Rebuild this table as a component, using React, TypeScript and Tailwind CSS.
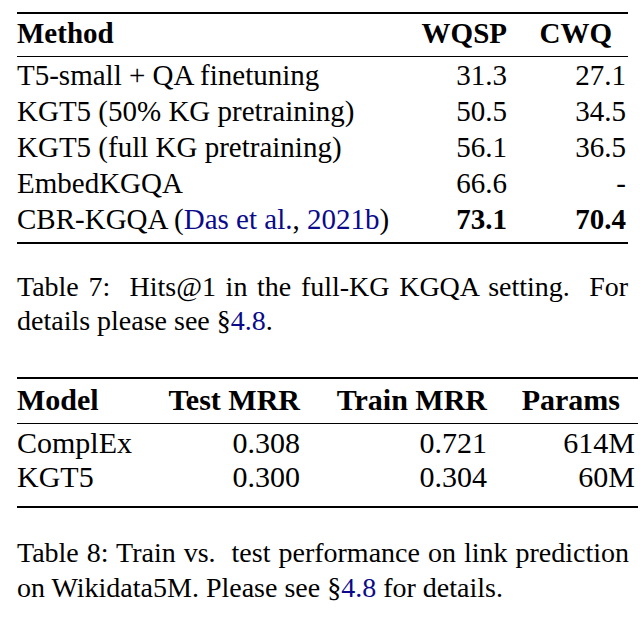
import React from "react";

const serif = { fontFamily: '"Liberation Serif", "Times New Roman", serif' };

function Link({ children }: { children: React.ReactNode }) {
  return <span className="text-[#0a0a8a]">{children}</span>;
}

export default function App() {
  const rows1: [React.ReactNode, string, string, boolean][] = [
    ["T5-small + QA finetuning", "31.3", "27.1", false],
    ["KGT5 (50% KG pretraining)", "50.5", "34.5", false],
    ["KGT5 (full KG pretraining)", "56.1", "36.5", false],
    ["EmbedKGQA", "66.6", "-", false],
    [
      <>
        CBR-KGQA (<Link>Das et al.</Link>, <Link>2021b</Link>)
      </>,
      "73.1",
      "70.4",
      true,
    ],
  ];
  const rows2 = [
    ["ComplEx", "0.308", "0.721", "614M"],
    ["KGT5", "0.300", "0.304", "60M"],
  ];
  return (
    <div className="w-[640px] h-[623px] bg-white text-black overflow-hidden pl-[17px] pt-[12px]" style={serif}>
      {/* Table 7 */}
      <div className="w-[611px] text-[29px]">
        <div className="h-[2px] bg-black" />
        <div className="flex pt-[1px] pb-[5px] leading-[36px] font-bold">
          <div className="flex-1">Method</div>
          <div className="w-[107px] text-right">WQSP</div>
          <div className="w-[119px] text-right pr-[14px]">CWQ</div>
          <div className="w-[2px]" />
        </div>
        <div className="h-[1px] bg-black" />
        <div className="pb-[5px]">
          {rows1.map(([m, a, b, bold], i) => (
            <div key={i} className="flex leading-[36px]">
              <div className="flex-1 whitespace-nowrap">{m}</div>
              <div className={`w-[107px] text-right ${bold ? "font-bold" : ""}`}>{a}</div>
              <div className={`w-[119px] text-right ${bold ? "font-bold" : ""}`}>{b}</div>
              <div className="w-[2px]" />
            </div>
          ))}
        </div>
        <div className="h-[2px] bg-black" />
      </div>
      <p className="w-[611px] mt-[26px] text-[28px] leading-[34px] text-justify">
        Table 7:{"\u00a0 "}Hits@1 in the full-KG KGQA setting.{"\u00a0 "}For details please see §<Link>4.8</Link>.
      </p>

      {/* Table 8 */}
      <div className="w-[621px] mt-[39px] text-[30px]">
        <div className="h-[2px] bg-black" />
        <div className="flex pt-[4px] pb-[6px] leading-[34px] font-bold">
          <div className="w-[143px]">Model</div>
          <div className="w-[140px] text-right">Test MRR</div>
          <div className="w-[187px] text-right">Train MRR</div>
          <div className="w-[148px] text-right pr-[15px]">Params</div>
          <div className="w-[3px]" />
        </div>
        <div className="h-[1px] bg-black" />
        <div className="pt-[2px] pb-[12px]">
          {rows2.map((r, i) => (
            <div key={i} className="flex leading-[34px]">
              <div className="w-[143px]">{r[0]}</div>
              <div className="w-[140px] text-right">{r[1]}</div>
              <div className="w-[187px] text-right">{r[2]}</div>
              <div className="w-[148px] text-right">{r[3]}</div>
              <div className="w-[3px]" />
            </div>
          ))}
        </div>
        <div className="h-[2px] bg-black" />
      </div>
      <p className="w-[612px] mt-[27px] text-[28px] leading-[35px] text-justify">
        Table 8: Train vs.{"\u00a0 "}test performance on link prediction on Wikidata5M. Please see §<Link>4.8</Link> for details.
      </p>
    </div>
  );
}
